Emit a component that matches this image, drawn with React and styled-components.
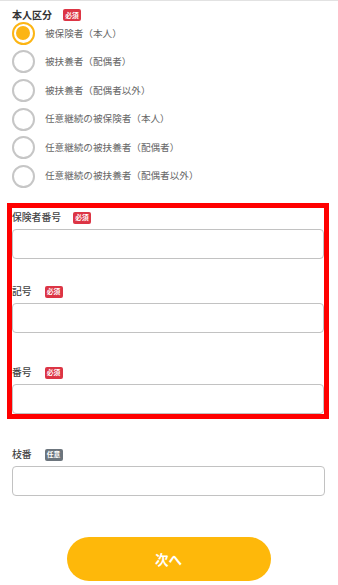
import React from "react";
import styled, { createGlobalStyle } from "styled-components";

const GlobalStyle = createGlobalStyle`
  html, body { margin: 0; padding: 0; background: #fff; }
  body {
    font-family: "Noto Sans CJK JP", "Noto Sans", sans-serif;
    -webkit-font-smoothing: antialiased;
  }
  * { box-sizing: border-box; }
`;

const Page = styled.div`
  width: 338px;
  border-top: 1px solid #e2e2e2;
  padding: 6px 13px 0 12px;
`;

const LabelRow = styled.div`
  display: flex;
  align-items: center;
  gap: ${(p) => p.$gap || 12}px;
  height: 16px;
  margin-top: ${(p) => p.$top || 0}px;
  margin-bottom: ${(p) => p.$bottom || 0}px;
`;

const Label = styled.span`
  font-size: ${(p) => (p.$big ? 10 : 9.8)}px;
  font-weight: ${(p) => (p.$big ? 700 : 500)};
  color: ${(p) => (p.$big ? "#333" : "#444")};
  line-height: 1;
  letter-spacing: 0;
`;

const Badge = styled.span`
  display: inline-flex;
  align-items: center;
  justify-content: center;
  width: 18px;
  height: 12px;
  border-radius: 2px;
  background: ${(p) => (p.$optional ? "#6c757d" : "#dc3545")};
  color: #fff;
  font-size: 6.8px;
  font-weight: 700;
  line-height: 1;
`;

const RadioList = styled.div`
  display: flex;
  flex-direction: column;
  margin-top: -4px;
`;

const RadioRow = styled.label`
  display: flex;
  align-items: center;
  gap: 10px;
  height: 28.6px;
`;

const RadioCircle = styled.span`
  position: relative;
  width: 23px;
  height: 23px;
  border-radius: 50%;
  border: 2.5px solid ${(p) => (p.$checked ? "#fcb514" : "#c6c6c6")};
  background: #fff;
  flex-shrink: 0;
  &::after {
    content: "";
    display: ${(p) => (p.$checked ? "block" : "none")};
    position: absolute;
    left: 2px;
    top: 2px;
    width: 14px;
    height: 14px;
    border-radius: 50%;
    background: #fcb514;
  }
`;

const RadioText = styled.span`
  font-size: 9.6px;
  color: #666;
  line-height: 1;
`;

const Highlight = styled.div`
  margin: 12px -4px 0 -5px;
  border: 5px solid #ff0000;
  padding: 2px 0 0 0;
`;

const Input = styled.input`
  display: block;
  width: 100%;
  height: 30px;
  border: 1.5px solid #c2c2c2;
  border-radius: 4px;
  background: #fff;
  outline: none;
  padding: 0 8px;
  font-family: inherit;
`;

const ButtonWrap = styled.div`
  display: flex;
  justify-content: center;
  margin-top: 41px;
`;

const NextButton = styled.button`
  width: 204px;
  height: 44px;
  border: none;
  border-radius: 22px;
  background: #feb80a;
  color: #fff;
  font-family: inherit;
  font-size: 13.5px;
  font-weight: 700;
  cursor: pointer;
`;

const options = [
  "被保険者（本人）",
  "被扶養者（配偶者）",
  "被扶養者（配偶者以外）",
  "任意継続の被保険者（本人）",
  "任意継続の被扶養者（配偶者）",
  "任意継続の被扶養者（配偶者以外）",
];

export default function App() {
  return (
    <>
      <GlobalStyle />
      <Page>
        <LabelRow $gap={11}>
          <Label $big>本人区分</Label>
          <Badge>必須</Badge>
        </LabelRow>
        <RadioList>
          {options.map((o, i) => (
            <RadioRow key={o}>
              <RadioCircle $checked={i === 0} />
              <RadioText>{o}</RadioText>
            </RadioRow>
          ))}
        </RadioList>

        <Highlight>
          <LabelRow $bottom={3}>
            <Label>保険者番号</Label>
            <Badge>必須</Badge>
          </LabelRow>
          <Input />
          <LabelRow $top={25} $bottom={3} $gap={13}>
            <Label>記号</Label>
            <Badge>必須</Badge>
          </LabelRow>
          <Input />
          <LabelRow $top={32} $bottom={3} $gap={13}>
            <Label>番号</Label>
            <Badge>必須</Badge>
          </LabelRow>
          <Input />
        </Highlight>

        <LabelRow $top={28} $bottom={3} $gap={13}>
          <Label>枝番</Label>
          <Badge $optional>任意</Badge>
        </LabelRow>
        <Input />

        <ButtonWrap>
          <NextButton>次へ</NextButton>
        </ButtonWrap>
      </Page>
    </>
  );
}
